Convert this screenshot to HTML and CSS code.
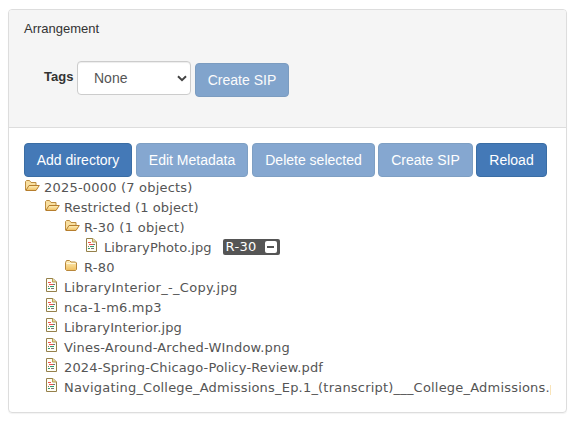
FILE: index.html
```html
<!DOCTYPE html>
<html lang="en">
<head>
<meta charset="utf-8">
<title>Arrangement</title>
<link rel="stylesheet" href="styles.css">
</head>
<body>
<svg class="defs" aria-hidden="true">
  <linearGradient id="gold" x1="0" y1="0" x2="0" y2="1"><stop offset="0" stop-color="#fff0bd"/><stop offset="1" stop-color="#efbd5c"/></linearGradient>
  <symbol id="open" viewBox="0 0 16 16">
    <path d="M1.500 12V3.500l1-1h3l1.500 2h5v2.500" fill="#f8dfa0" stroke="#bd8d40"/>
    <path d="M1.800 12.500L5 7.500h10.300L12 12.500z" fill="url(#gold)" stroke="#b67e2d"/>
  </symbol>
  <symbol id="closed" viewBox="0 0 16 16">
    <path d="M1.500 4.500l1-2h3l1.500 1.500h4.500l1 1v6.500l-1 1h-9l-1-1z" fill="url(#gold)" stroke="#b8873b"/>
    <path d="M2.500 5.500h9" stroke="#fff7da"/>
  </symbol>
  <symbol id="file" viewBox="0 0 16 16">
    <path d="M2.500 .5h6.500l3.500 3.500v9.500h-10z" fill="#fffef5" stroke="#95804b"/>
    <path d="M8.500 .5v3.500h4" fill="#ead99b" stroke="#b19a51"/>
    <path d="M4 4.500h3M5 6.500h4" stroke="#f05050"/>
    <path d="M9 6.500h2M4 8.500h1" stroke="#777"/>
    <path d="M6 8.500h4M4 10.500h2" stroke="#359c70"/>
    <path d="M7 10.500h3" stroke="#777"/>
  </symbol>
</svg>
<section class="panel">
  <header class="panel-heading">
    <div class="title">Arrangement</div>
    <div class="filters">
      <label for="tags">Tags</label>
      <div class="select-wrap">
        <select id="tags"><option>None</option></select>
        <svg class="chevron" viewBox="0 0 10 7"><path d="M1 1.200l4 4 4-4" fill="none" stroke="#444" stroke-width="2"/></svg>
      </div>
      <button class="btn sip" disabled>Create SIP</button>
    </div>
  </header>
  <div class="panel-body">
    <div class="toolbar">
      <button class="btn add">Add directory</button>
      <button class="btn edit" disabled>Edit Metadata</button>
      <button class="btn delete" disabled>Delete selected</button>
      <button class="btn create" disabled>Create SIP</button>
      <button class="btn reload">Reload</button>
    </div>
    <ul class="tree">
      <li><div class="row"><svg><use href="#open"/></svg><span class="loose">2025-0000 (7 objects)</span></div>
        <ul>
          <li><div class="row"><svg><use href="#open"/></svg><span class="snug">Restricted (1 object)</span></div>
            <ul>
              <li><div class="row"><svg><use href="#open"/></svg><span class="wide">R-30 (1 object)</span></div>
                <ul><li><div class="row"><svg><use href="#file"/></svg><span class="tight">LibraryPhoto.jpg</span><span class="tag">R-30<i class="remove"></i></span></div></li></ul>
              </li>
              <li><div class="row"><svg><use href="#closed"/></svg><span class="wide">R-80</span></div></li>
            </ul>
          </li>
          <li><div class="row"><svg><use href="#file"/></svg><span class="wide">LibraryInterior_-_Copy.jpg</span></div></li>
          <li><div class="row"><svg><use href="#file"/></svg><span class="loose">nca-1-m6.mp3</span></div></li>
          <li><div class="row"><svg><use href="#file"/></svg><span class="snug">LibraryInterior.jpg</span></div></li>
          <li><div class="row"><svg><use href="#file"/></svg><span class="loose">Vines-Around-Arched-WIndow.png</span></div></li>
          <li><div class="row"><svg><use href="#file"/></svg><span class="medium">2024-Spring-Chicago-Policy-Review.pdf</span></div></li>
          <li><div class="row"><svg><use href="#file"/></svg><span class="loose">Navigating_College_Admissions_Ep.1_(transcript)___College_Admissions.pdf</span></div></li>
        </ul>
      </li>
    </ul>
  </div>
</section>
</body>
</html>
```

FILE: styles.css
```css
* { box-sizing: border-box; }
body { margin: 0; padding: 9px 8px; background: #fff; color: #333; font: 13px/18px "Liberation Sans", Arial, sans-serif; overflow: hidden; }
.defs { position: absolute; width: 0; height: 0; }
.panel { width: 559px; height: 404px; border: 1px solid #ddd; border-radius: 4px; box-shadow: 0 1px 1px rgba(0,0,0,.05); overflow: hidden; }
.panel-heading { height: 118px; padding: 10px 15px; background: #f5f5f5; border-bottom: 1px solid #ddd; }
.filters { display: flex; align-items: flex-start; margin: 23px 0 0 20px; }
label { width: 33px; padding-top: 7px; font-weight: bold; font-size: 13px; }
.select-wrap { position: relative; width: 114px; height: 34px; }
select { appearance: none; width: 100%; height: 100%; padding: 0 16px; border: 1px solid #ccc; border-radius: 4px; background: #fff; color: #555; font: 14px "Liberation Sans", Arial, sans-serif; box-shadow: inset 0 1px 1px rgba(0,0,0,.075); }
.chevron { position: absolute; right: 4px; top: 14px; width: 10px; height: 7px; }
.btn { height: 34px; padding: 0; border: 1px solid #3a6da4; border-radius: 4px; background: #4479b7; color: #fff; font: 14px "Liberation Sans", Arial, sans-serif; white-space: nowrap; }
.btn:disabled { opacity: .65; }
.sip { width: 94px; margin: 2px 0 0 4px; }
.panel-body { padding: 15px; }
.toolbar { display: flex; height: 34px; }
.add { width: 108px; margin-right: 4px; }
.edit { width: 112px; margin-right: 4px; }
.delete { width: 123px; margin-right: 3px; }
.create { width: 95px; margin-right: 3px; }
.reload { width: 71px; }
.tree { overflow: hidden; color: #555; font: 13px/22px "DejaVu Sans", Verdana, sans-serif; }
ul { list-style: none; margin: 0; padding: 0; }
ul ul { padding-left: 20px; }
.row { display: flex; height: 20px; white-space: nowrap; }
.row svg { flex: none; width: 16px; height: 16px; margin: 1px 4px 0 0; }
.tight { letter-spacing: .06px; }
.snug { letter-spacing: .1px; }
.medium { letter-spacing: .14px; }
.loose { letter-spacing: .2px; }
.wide { letter-spacing: .29px; }
.tag { display: flex; align-items: center; justify-content: space-between; width: 57px; height: 16px; margin: 2px 0 0 11px; padding: 0 3px; border-radius: 2px; background: #555; color: #fff; line-height: 16px; letter-spacing: .35px; }
.remove { width: 12px; height: 12px; border-radius: 2px; background: linear-gradient(#555, #555) center / 7px 2px no-repeat #fff; }
```
